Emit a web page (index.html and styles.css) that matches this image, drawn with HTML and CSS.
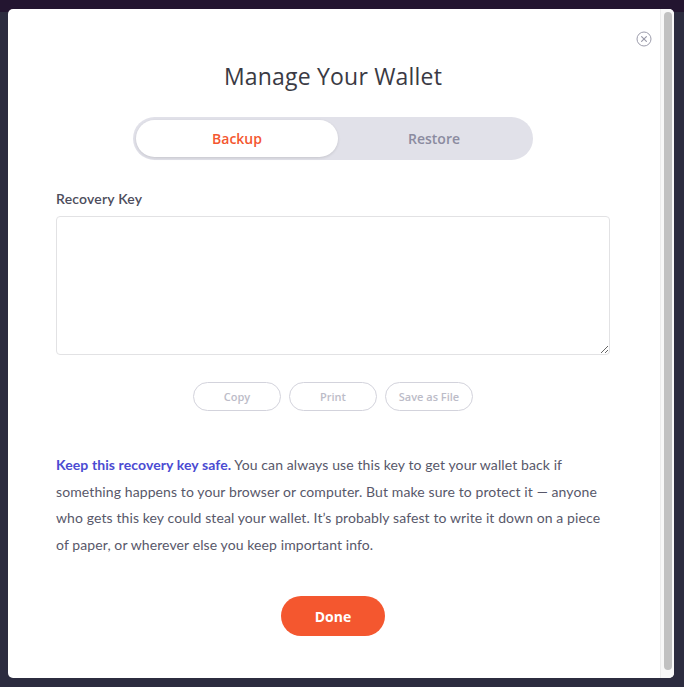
FILE: index.html
```html
<!DOCTYPE html>
<html>
<head>
<meta charset="utf-8">
<link rel="stylesheet" href="styles.css">
</head>
<body>
<div class="backdrop">
  <div class="topstrip"></div>
  <div class="modal">
    <button class="close" aria-label="Close">
      <svg width="16" height="16" viewBox="0 0 16 16"><circle cx="8" cy="8" r="7" fill="none" stroke="#9c9cab" stroke-width="1"/><path d="M5.6 5.6 L10.4 10.4 M10.4 5.6 L5.6 10.4" stroke="#9c9cab" stroke-width="1.2" stroke-linecap="round"/></svg>
    </button>
    <div class="content">
      <h1 class="title">Manage Your Wallet</h1>
      <div class="toggle">
        <div class="tab active">Backup</div>
        <div class="tab rest">Restore</div>
      </div>
      <label class="label">Recovery Key</label>
      <textarea class="key"></textarea>
      <div class="actions">
        <button class="ghost">Copy</button>
        <button class="ghost">Print</button>
        <button class="ghost">Save as File</button>
      </div>
      <p class="note"><strong>Keep this recovery key safe.</strong> You can always use this key to get your wallet back if something happens to your browser or computer. But make sure to protect it — anyone who gets this key could steal your wallet. It’s probably safest to write it down on a piece of paper, or wherever else you keep important info.</p>
      <button class="done">Done</button>
    </div>
    <div class="scrollbar"><div class="thumb"></div></div>
  </div>
</div>
</body>
</html>
```

FILE: styles.css
```css
html, body { margin: 0; padding: 0; }
body { width: 684px; height: 687px; overflow: hidden; background: #2c2c3f; }
.backdrop { position: relative; width: 684px; height: 687px; padding-top: 9px; box-sizing: border-box; }
.topstrip { position: absolute; left: 0; top: 0; width: 684px; height: 12px; background: #231530; }
.modal {
  position: relative;
  margin-left: 8px;
  width: 666px;
  height: 669px;
  background: #fff;
  border-radius: 5px;
  box-sizing: border-box;
  overflow: hidden;
}
.close {
  position: absolute; right: 22px; top: 22px;
  width: 16px; height: 16px; padding: 0; border: 0; background: none; display: block;
}
.close svg { display: block; }
.content {
  width: 650px;
  padding-top: 51px;
  display: flex; flex-direction: column; align-items: center;
  font-family: "Lato", "Noto Sans", sans-serif;
}
.title {
  margin: 0; font-family: "Open Sans", sans-serif; font-weight: 400;
  font-size: 23px; line-height: 32px; color: #3a3a44; letter-spacing: 0.2px;
}
.toggle {
  margin-top: 25px; width: 400px; height: 43px; box-sizing: border-box; padding: 3px;
  background: #e1e1e9; border-radius: 22px; display: flex;
}
.tab {
  display: flex; align-items: center; justify-content: center;
  font-family: "Open Sans", sans-serif; font-weight: 600; font-size: 14px; color: #8b8ba0;
  border-radius: 19px;
}
.tab.active { width: 202px; background: #fff; color: #f4572f; box-shadow: 0 1px 3px rgba(0,0,0,0.12); }
.tab.rest { flex: 1; }
.label {
  align-self: flex-start; margin-left: 48px; margin-top: 29px;
  font-size: 14px; line-height: 20px; color: #4d4d5c; font-weight: 600; letter-spacing: 0.2px;
}
.key {
  margin-top: 7px; width: 554px; height: 139px; box-sizing: border-box;
  border: 1px solid #e2e2e4; border-radius: 4px; resize: vertical; outline: none; margin-bottom: 0;
}
.actions { margin-top: 27px; display: flex; gap: 8px; }
.ghost {
  width: 88px; height: 29px; border: 1px solid #d3d3dc; border-radius: 15px; background: #fff;
  font-family: "Open Sans", sans-serif; font-weight: 600; font-size: 11px; color: #bcbcc8; padding: 0;
}
.note {
  margin: 41px 0 0; width: 554px; font-size: 14px; line-height: 26.5px; color: #58586a; letter-spacing: 0.1px;
}
.note strong { color: #4b4bd2; font-weight: 700; }
.done {
  margin-top: 38px; width: 104px; height: 40px; border: 0; border-radius: 20px; background: #f4572f;
  color: #fff; font-family: "Open Sans", sans-serif; font-weight: 700; font-size: 14px;
}
.scrollbar {
  position: absolute; right: 0; top: 0; width: 14px; height: 100%;
  background: #f8f8f8; border-left: 1px solid #ececec; box-sizing: border-box;
}
.thumb { position: absolute; left: 3px; top: 3px; bottom: 8px; width: 8px; border-radius: 4px; background: #c1c1c1; }
```
